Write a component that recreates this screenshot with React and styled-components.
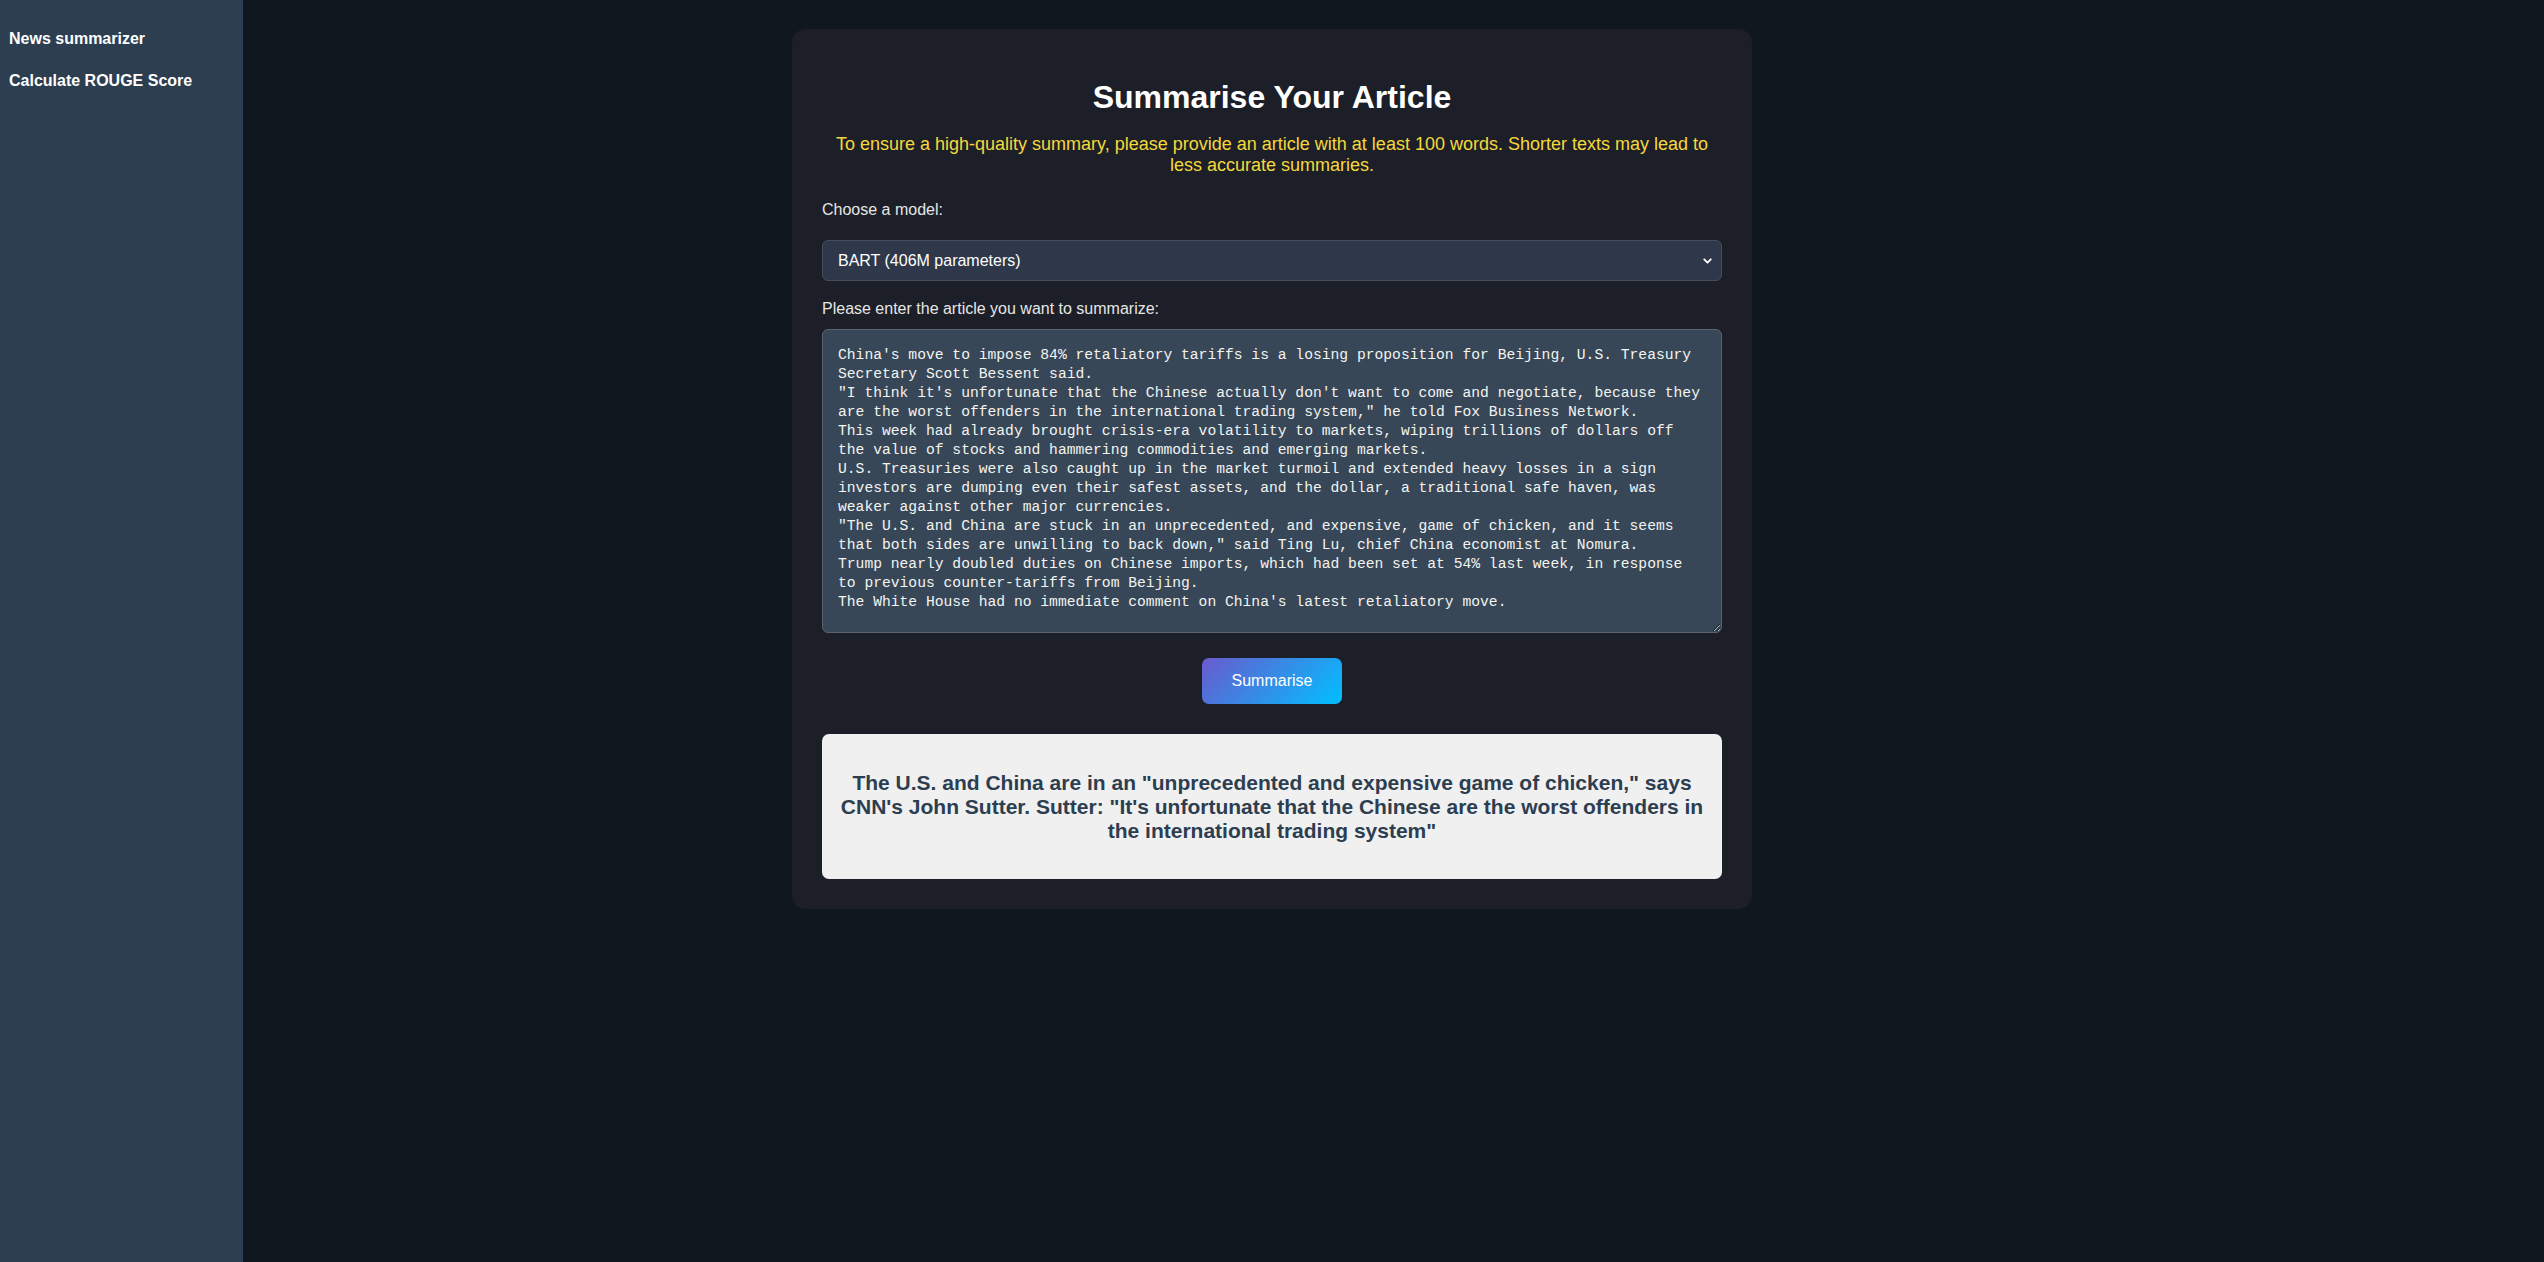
import React from 'react';
import styled, { createGlobalStyle } from 'styled-components';
import { ChevronDown } from 'lucide-react';

const GlobalStyle = createGlobalStyle`
    html, body {
        margin: 0;
        padding: 0;
        background: #11171f;
        font-family: "Liberation Sans", Arial, sans-serif;
    }
    * { box-sizing: border-box; }
`;

const Page = styled.div`
    display: grid;
    grid-template-columns: 243px 1fr;
    min-height: 100vh;
    background: #11171f;
`;

const Sidebar = styled.nav`
    background: #2c3e50;
    padding: 30px 9px;
    display: flex;
    flex-direction: column;
    gap: 24px;
`;

const NavItem = styled.a`
    color: #ffffff;
    font-weight: bold;
    font-size: 16px;
    line-height: 18px;
    text-decoration: none;
    cursor: pointer;
`;

const Main = styled.main`
    padding: 29px 243px 40px 0;
`;

const Card = styled.section`
    width: 960px;
    margin: 0 auto;
    background: #1c1f27;
    border-radius: 14px;
    padding: 30px;
    display: flex;
    flex-direction: column;
    color: #e6e6e6;
`;

const Title = styled.h1`
    margin: 20px 0 0;
    font-size: 32px;
    line-height: 37px;
    font-weight: bold;
    text-align: center;
    color: #ffffff;
`;

const Notice = styled.p`
    margin: 18px 0 0;
    font-size: 18px;
    line-height: 21px;
    text-align: center;
    color: #f4d83c;
`;

const Label = styled.label`
    display: block;
    margin-top: ${p => p.$top}px;
    font-size: 16px;
    line-height: 18px;
    color: #e6e6e6;
`;

const SelectWrap = styled.div`
    position: relative;
    margin-top: 21px;
`;

const Select = styled.select`
    appearance: none;
    width: 100%;
    height: 41px;
    padding: 0 36px 0 15px;
    background: #2e384a;
    border: 1px solid #454d5b;
    border-radius: 6px;
    color: #ffffff;
    font-family: "Liberation Sans", Arial, sans-serif;
    font-size: 16px;
    outline: none;
`;

const Chevron = styled(ChevronDown)`
    position: absolute;
    right: 8px;
    top: 50%;
    transform: translateY(-50%);
    color: #ffffff;
    pointer-events: none;
`;

const Article = styled.textarea`
    margin-top: 11px;
    width: 100%;
    height: 304px;
    padding: 16px 15px;
    background: #374758;
    border: 1px solid #5a6270;
    border-radius: 6px;
    color: #f4f4f0;
    font-family: "Liberation Mono", "DejaVu Sans Mono", monospace;
    font-size: 14.67px;
    line-height: 19px;
    resize: vertical;
    outline: none;
`;

const SubmitButton = styled.button`
    align-self: center;
    margin-top: 25px;
    width: 140px;
    height: 46px;
    border: none;
    border-radius: 7px;
    background: linear-gradient(135deg, #6a5acd 0%, #00bfff 100%);
    color: #ffffff;
    font-family: "Liberation Sans", Arial, sans-serif;
    font-size: 16px;
    cursor: pointer;
`;

const Summary = styled.div`
    margin-top: 30px;
    padding: 37px 15px 36px;
    background: #f0f0f0;
    border-radius: 7px;
    color: #2c3e50;
    font-size: 21px;
    line-height: 24px;
    font-weight: bold;
    text-align: center;
`;

const article = `China's move to impose 84% retaliatory tariffs is a losing proposition for Beijing, U.S. Treasury Secretary Scott Bessent said.
"I think it's unfortunate that the Chinese actually don't want to come and negotiate, because they are the worst offenders in the international trading system," he told Fox Business Network.
This week had already brought crisis-era volatility to markets, wiping trillions of dollars off the value of stocks and hammering commodities and emerging markets.
U.S. Treasuries were also caught up in the market turmoil and extended heavy losses in a sign investors are dumping even their safest assets, and the dollar, a traditional safe haven, was weaker against other major currencies.
"The U.S. and China are stuck in an unprecedented, and expensive, game of chicken, and it seems that both sides are unwilling to back down," said Ting Lu, chief China economist at Nomura.
Trump nearly doubled duties on Chinese imports, which had been set at 54% last week, in response to previous counter-tariffs from Beijing.
The White House had no immediate comment on China's latest retaliatory move.`;

export default function App() {
    return (
        <>
            <GlobalStyle />
            <Page>
                <Sidebar>
                    <NavItem>News summarizer</NavItem>
                    <NavItem>Calculate ROUGE Score</NavItem>
                </Sidebar>
                <Main>
                    <Card>
                        <Title>Summarise Your Article</Title>
                        <Notice>
                            To ensure a high-quality summary, please provide an article with at least 100 words. Shorter texts may lead to less accurate summaries.
                        </Notice>
                        <Label $top={25} htmlFor="model">Choose a model:</Label>
                        <SelectWrap>
                            <Select id="model" defaultValue="bart">
                                <option value="bart">BART (406M parameters)</option>
                                <option value="t5">T5</option>
                            </Select>
                            <Chevron size={13} strokeWidth={3.5} />
                        </SelectWrap>
                        <Label $top={19} htmlFor="article">Please enter the article you want to summarize:</Label>
                        <Article id="article" defaultValue={article} />
                        <SubmitButton>Summarise</SubmitButton>
                        <Summary>
                            The U.S. and China are in an "unprecedented and expensive game of chicken," says CNN's John Sutter. Sutter: "It's unfortunate that the Chinese are the worst offenders in the international trading system"
                        </Summary>
                    </Card>
                </Main>
            </Page>
        </>
    );
}
